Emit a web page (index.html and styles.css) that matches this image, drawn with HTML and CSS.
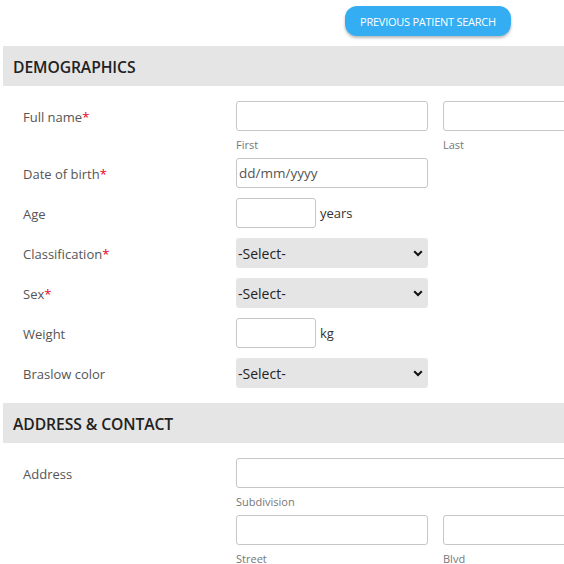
FILE: index.html
```html
<!DOCTYPE html>
<html>
<head>
<meta charset="utf-8">
<link rel="stylesheet" href="styles.css">
</head>
<body>
<div class="page">
  <div class="toolbar">
    <button class="btn-search">PREVIOUS PATIENT SEARCH</button>
  </div>

  <section class="section">
    <h2 class="section-title">DEMOGRAPHICS</h2>
    <div class="section-body">
      <div class="row">
        <label class="label">Full name<span class="req">*</span></label>
        <div class="controls">
          <div class="pair">
            <div class="field">
              <input class="input w192" type="text">
              <div class="sub">First</div>
            </div>
            <div class="field">
              <input class="input w192" type="text">
              <div class="sub">Last</div>
            </div>
          </div>
        </div>
      </div>
      <div class="row">
        <label class="label">Date of birth<span class="req">*</span></label>
        <div class="controls"><input class="input w192" type="text" placeholder="dd/mm/yyyy"></div>
      </div>
      <div class="row">
        <label class="label">Age</label>
        <div class="controls inline"><input class="input w80" type="text"><span class="unit">years</span></div>
      </div>
      <div class="row">
        <label class="label">Classification<span class="req">*</span></label>
        <div class="controls">
          <div class="select-wrap">
            <select class="select"><option>-Select-</option></select>
            <svg class="chev" width="10" height="7" viewBox="0 0 10 7"><path d="M1.2 1.3 L5 5 L8.8 1.3" fill="none" stroke="#111" stroke-width="2"/></svg>
          </div>
        </div>
      </div>
      <div class="row">
        <label class="label">Sex<span class="req">*</span></label>
        <div class="controls">
          <div class="select-wrap">
            <select class="select"><option>-Select-</option></select>
            <svg class="chev" width="10" height="7" viewBox="0 0 10 7"><path d="M1.2 1.3 L5 5 L8.8 1.3" fill="none" stroke="#111" stroke-width="2"/></svg>
          </div>
        </div>
      </div>
      <div class="row">
        <label class="label">Weight</label>
        <div class="controls inline"><input class="input w80" type="text"><span class="unit">kg</span></div>
      </div>
      <div class="row">
        <label class="label">Braslow color</label>
        <div class="controls">
          <div class="select-wrap">
            <select class="select"><option>-Select-</option></select>
            <svg class="chev" width="10" height="7" viewBox="0 0 10 7"><path d="M1.2 1.3 L5 5 L8.8 1.3" fill="none" stroke="#111" stroke-width="2"/></svg>
          </div>
        </div>
      </div>
    </div>
  </section>

  <section class="section">
    <h2 class="section-title">ADDRESS &amp; CONTACT</h2>
    <div class="section-body">
      <div class="row">
        <label class="label">Address</label>
        <div class="controls">
          <div class="field">
            <input class="input w399" type="text">
            <div class="sub">Subdivision</div>
          </div>
          <div class="pair">
            <div class="field">
              <input class="input w192" type="text">
              <div class="sub">Street</div>
            </div>
            <div class="field">
              <input class="input w192" type="text">
              <div class="sub">Blvd</div>
            </div>
          </div>
        </div>
      </div>
    </div>
  </section>
</div>
</body>
</html>
```

FILE: styles.css
```css
html, body {
  margin: 0;
  padding: 0;
  background: #fff;
  overflow: hidden;
}
body {
  font-family: "Open Sans", "Noto Sans", sans-serif;
  color: #555;
}
.page {
  width: 660px;
  padding: 6px 0 0 3px;
}
.toolbar {
  display: flex;
  padding-left: 342px;
}
.btn-search {
  height: 30px;
  width: 166px;
  border: none;
  border-radius: 12px;
  background: #35adf2;
  color: #fff;
  font-family: "Open Sans", sans-serif;
  font-size: 11px;
  letter-spacing: -0.25px;
  box-shadow: 0 2px 3px rgba(0,0,0,0.28);
  padding: 0;
}
.section {
  margin-top: 10px;
}
.section + .section {
  margin-top: 0;
}
.section-title {
  margin: 0;
  height: 40px;
  line-height: 42px;
  background: #e5e5e5;
  padding-left: 10px;
  font-size: 15.7px;
  font-weight: 600;
  color: #222;
  letter-spacing: -0.1px;
}
.section-body {
  padding: 15px 0 15px;
}
.row {
  display: flex;
  margin-bottom: 10px;
}
.row:last-child {
  margin-bottom: 0;
}
.label {
  width: 233px;
  padding-left: 20px;
  box-sizing: border-box;
  font-size: 13px;
  line-height: 32px;
  height: 30px;
  color: #555;
  flex-shrink: 0;
}
.req {
  color: #e8001c;
}
.controls {
  display: flex;
  flex-direction: column;
  align-items: flex-start;
}
.controls.inline {
  flex-direction: row;
  align-items: center;
}
.pair {
  display: flex;
  gap: 15px;
}
.field {
  display: flex;
  flex-direction: column;
}
.field .sub {
  margin-bottom: -5px;
}
.input {
  height: 30px;
  box-sizing: border-box;
  border: 1px solid #c6c6c6;
  border-radius: 3px;
  padding: 0 2px;
  font-family: "Open Sans", sans-serif;
  font-size: 13.5px;
  color: #555;
  background: #fff;
  margin: 0;
}
.input::placeholder {
  color: #555;
  opacity: 1;
}
.w192 { width: 192px; }
.w80 { width: 80px; }
.w399 { width: 399px; }
.unit {
  margin-left: 4px;
  font-size: 13px;
  color: #333;
}
.sub {
  padding-top: 6px;
  height: 16px;
  line-height: 16px;
  font-size: 11px;
  color: #777;
}
.controls > .field + .pair {
  margin-top: 10px;
}
.select-wrap {
  position: relative;
  width: 192px;
  height: 30px;
}
.select {
  appearance: none;
  -webkit-appearance: none;
  width: 192px;
  height: 30px;
  border: none;
  border-radius: 3px;
  background: #e5e5e5;
  padding: 0 2px;
  font-family: "Open Sans", sans-serif;
  font-size: 14px;
  color: #222;
  margin: 0;
}
.chev {
  position: absolute;
  right: 5px;
  top: 12px;
  pointer-events: none;
}
```
